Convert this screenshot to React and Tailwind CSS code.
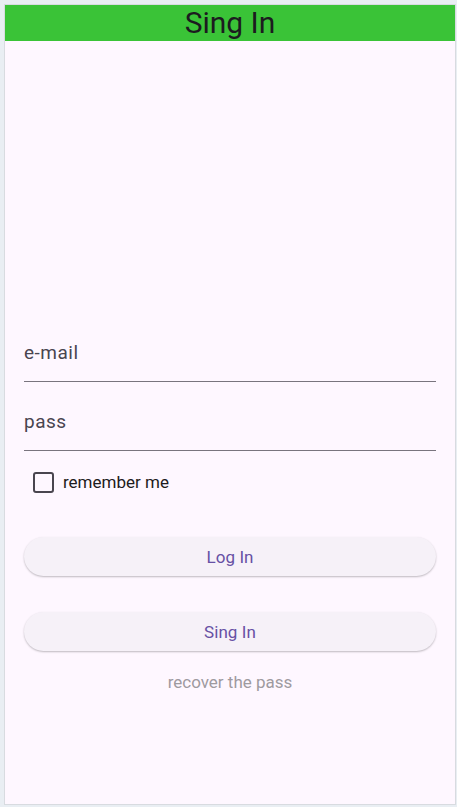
export default function App() {
  return (
    <div
      className="w-[457px] h-[807px] bg-[#e9eef3] pt-[4px] pl-[4px] pr-[1px] pb-[2px]"
      style={{ fontFamily: 'Roboto, "Noto Sans", sans-serif' }}
    >
      <div className="h-full flex flex-col border border-[#d8dbe0] bg-[#fef7ff]">
        {/* App bar */}
        <header className="h-[36px] shrink-0 bg-[#3ac337] flex items-center justify-center">
          <h1 className="text-[30px] leading-[36px] text-[#1c1b1f]">Sing In</h1>
        </header>

        {/* Form */}
        <div className="flex flex-col px-[19px] pt-[300px]">
          <div className="pb-[16px] border-b border-[#79747e]">
            <span className="block text-[19px] leading-[24px] tracking-[0.5px] text-[#49454f]">e-mail</span>
          </div>
          <div className="pt-[28px] pb-[16px] border-b border-[#79747e]">
            <span className="block text-[19px] leading-[24px] tracking-[0.5px] text-[#49454f]">pass</span>
          </div>

          <label className="mt-[21px] ml-[9px] flex items-center gap-[9px] h-[21px]">
            <span className="w-[21px] h-[21px] rounded-[3px] border-2 border-[#49454f]" />
            <span className="text-[17px] leading-[21px] text-[#1d1b20]">remember me</span>
          </label>

          <button className="mt-[44px] h-[39px] pt-[2px] rounded-full bg-[#f6f1f8] shadow-[0_1px_2px_rgba(0,0,0,0.25)] text-[17px] tracking-[0.1px] text-[#6750a4]">
            Log In
          </button>
          <button className="mt-[36px] h-[39px] pt-[2px] rounded-full bg-[#f6f1f8] shadow-[0_1px_2px_rgba(0,0,0,0.25)] text-[17px] tracking-[0.1px] text-[#6750a4]">
            Sing In
          </button>

          <p className="mt-[21px] text-center text-[17px] leading-[20px] text-[#9e9a9f]">recover the pass</p>
        </div>
      </div>
    </div>
  );
}
